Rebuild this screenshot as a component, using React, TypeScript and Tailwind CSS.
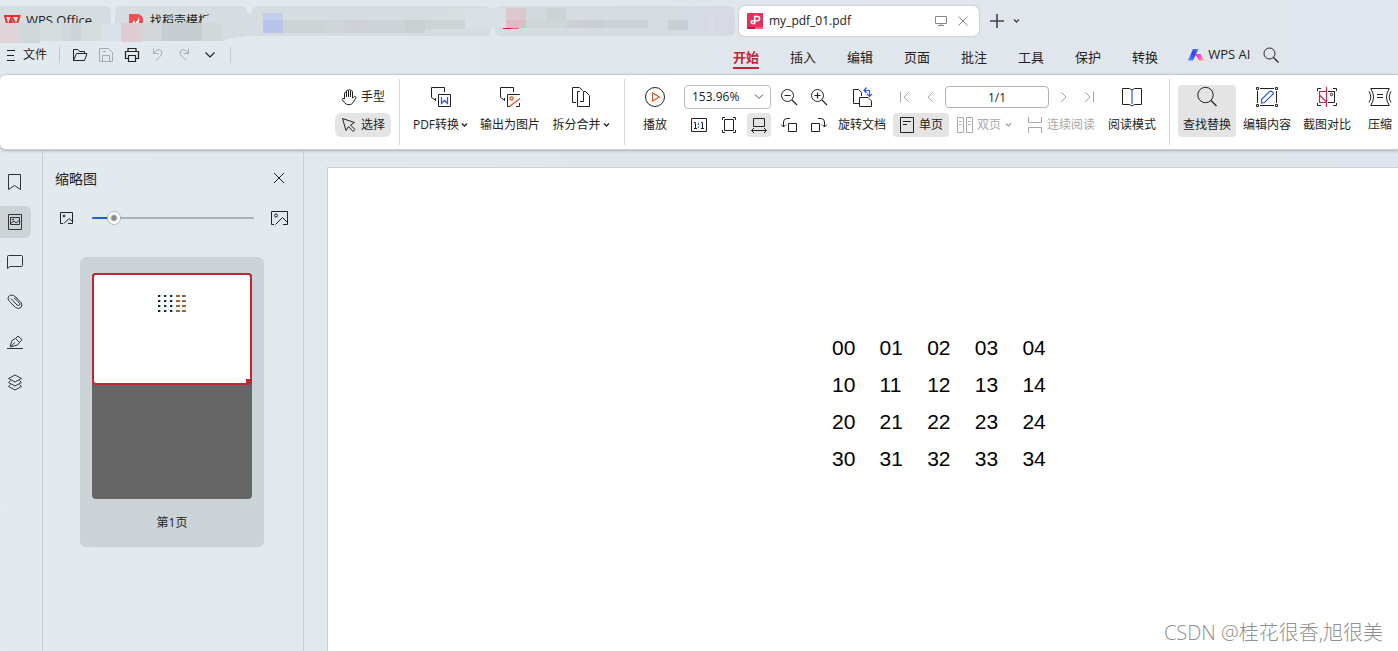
import React from "react";

type Box = { w?: number; h?: number; className?: string; children: React.ReactNode };

function Icon({ w = 20, h = 20, className = "", children }: Box) {
  return (
    <svg
      width={w}
      height={h}
      viewBox={`0 0 ${w} ${h}`}
      fill="none"
      stroke="currentColor"
      strokeWidth="1"
      className={`shrink-0 ${className}`}
      aria-hidden="true"
    >
      {children}
    </svg>
  );
}

function Caret({ className = "" }: { className?: string }) {
  return (
    <Icon w={7} h={6} className={className}>
      <path d="M1 1.5 L3.5 4 L6 1.5" strokeWidth="1.4" />
    </Icon>
  );
}

function Divider({ className = "" }: { className?: string }) {
  return <div className={`mt-1 h-[66px] w-px shrink-0 bg-[#d4d6d9] ${className}`} />;
}

function Tool({
  label,
  icon,
  caret = false,
  className = "",
}: {
  label: string;
  icon: React.ReactNode;
  caret?: boolean;
  className?: string;
}) {
  return (
    <button type="button" className={`mt-[10px] flex h-[52px] shrink-0 flex-col items-center gap-1 ${className}`}>
      <span className="flex h-6 items-center justify-center">{icon}</span>
      <span className="flex h-6 items-center justify-center gap-[2px] whitespace-nowrap">
        {label}
        {caret && <Caret />}
      </span>
    </button>
  );
}

function IconButton({
  label,
  active = false,
  children,
}: {
  label: string;
  active?: boolean;
  children: React.ReactNode;
}) {
  return (
    <button
      type="button"
      aria-label={label}
      className={`flex size-6 shrink-0 items-center justify-center rounded ${active ? "bg-[#e4e4e4]" : ""}`}
    >
      {children}
    </button>
  );
}

const mosaic: [number, number, number, number, string][] = [
  [0, 23, 20, 20, "#dfd5d8"],
  [20, 23, 20, 20, "#d0d7da"],
  [40, 23, 21, 18, "#d7dddf"],
  [61, 23, 10, 18, "#d2d9dc"],
  [71, 23, 10, 18, "#cdd4d7"],
  [81, 23, 20, 18, "#d5dcde"],
  [101, 23, 20, 18, "#dae1ea"],
  [121, 23, 21, 19, "#e0cdd1"],
  [142, 23, 20, 18, "#d3d6d9"],
  [162, 23, 40, 18, "#c7ced1"],
  [202, 23, 20, 18, "#d1d8da"],
  [263, 13, 20, 7, "#c5cdec"],
  [263, 20, 20, 13, "#b9c3ec"],
  [283, 20, 41, 13, "#cdd4d6"],
  [324, 20, 21, 13, "#cfd5d8"],
  [345, 20, 20, 13, "#cfd0d8"],
  [365, 20, 40, 13, "#ced3d7"],
  [405, 20, 20, 13, "#c9d0d2"],
  [425, 20, 40, 9, "#cdd4d6"],
  [445, 8, 20, 12, "#d7dee0"],
  [465, 8, 41, 20, "#d9e1e4"],
  [506, 8, 20, 12, "#ddc8cf"],
  [506, 20, 20, 8, "#dfbcc5"],
  [526, 8, 20, 12, "#d3dadd"],
  [526, 20, 40, 8, "#cfd6d8"],
  [546, 8, 20, 12, "#ccd3d5"],
  [566, 20, 20, 8, "#cfd0d3"],
  [586, 20, 20, 8, "#c9d0d2"],
  [606, 20, 42, 8, "#cdd4d6"],
  [668, 20, 20, 10, "#c9cfd4"],
  [708, 13, 6, 20, "#dadde6"],
  [503, 28, 8, 1, "#c8164a"],
  [511, 28, 8, 1, "#f2557a"],
];

function Mosaic() {
  return (
    <svg className="pointer-events-none absolute top-0 left-0" width="740" height="46" shapeRendering="crispEdges" aria-hidden="true">
      <path d="M202 18 L232 13 L262 13 L262 35 L238 37 L222 41 L202 41Z" fill="#d6dde0" />
      {mosaic.map(([x, y, w, h, fill], i) => (
        <rect key={i} x={x} y={y} width={w} height={h} fill={fill} />
      ))}
    </svg>
  );
}

function TitleBar() {
  return (
    <div className="relative flex h-[37px] shrink-0 items-start pt-[6px] text-[12px] text-[#222]">
      <button type="button" className="flex h-[30px] w-[111px] shrink-0 items-center gap-[5px] rounded-tr-md bg-[#d5dde0] pl-1">
        <svg width="17" height="12" viewBox="0 0 17 12" fill="none" stroke="#ee2b2b" strokeWidth="2" aria-hidden="true">
          <path d="M0 1H15.5L12.5 10H9L6.5 5L5 10H3.5L1 1M7 1L11 8" />
        </svg>
        <span className="text-[13px]">WPS Office</span>
      </button>
      <button type="button" className="ml-1 flex h-[30px] w-[132px] shrink-0 items-center gap-[7px] rounded-md bg-[#d5dde0] pl-[14px]">
        <svg width="14" height="14" viewBox="0 0 14 14" aria-hidden="true">
          <path d="M0 0H8a6 6 0 0 1 6 7v1a6 6 0 0 1-6 6H0Z" fill="#f04e52" />
          <path d="M4 13C2 9 4 9 5 6c1 2 1 3 1 4 1-3 3-3 4-7 1 6-1 7-3 10Z" fill="#fff" />
        </svg>
        <span>找稻壳模板</span>
      </button>
      <div className="ml-[5px] h-[30px] w-[239px] shrink-0 rounded-md bg-[#d5dde0]" />
      <div className="ml-1 h-[30px] w-[240px] shrink-0 rounded-md bg-linear-to-r from-[#d5dde0] to-[#d7dae3]" />
      <div className="ml-1 flex h-[30px] w-[240px] shrink-0 items-center rounded-md bg-white pr-[10px] pl-2 shadow-[0_0_2px_#9ca3af]">
        <svg width="16" height="16" viewBox="0 0 16 16" className="shrink-0" aria-hidden="true">
          <rect width="16" height="16" rx="1" fill="#e4325c" />
          <path d="M0 14H8V16H1Q0 16 0 15Z" fill="#c8164a" />
          <path d="M8 14H16V15Q16 16 15 16H8Z" fill="#fb5b81" />
          <path d="M7.7 11.2V3.5H10.5a2 2 0 0 1 0 4.200H5.500a1.400 1.400 0 0 0 0 2.800H7.700" fill="none" stroke="#fff" strokeWidth="1.5" />
        </svg>
        <span className="ml-[6px] flex-1 text-[12px]">my_pdf_01.pdf</span>
        <Icon w={12} h={12} className="mr-[10px] text-[#888]">
          <path d="M.5 1.5H11.5V8.5H.5ZM6 8.5V10.5M3 10.5H9" />
        </Icon>
        <button type="button" aria-label="关闭标签">
          <Icon w={12} h={12} className="text-[#888]">
            <path d="M1.5 1.5L10.5 10.5M10.5 1.5L1.5 10.5" />
          </Icon>
        </button>
      </div>
      <div className="flex h-[30px] items-center text-[#444]">
        <button type="button" aria-label="新建" className="ml-[11px]">
          <Icon w={14} h={14}>
            <path d="M0 7H14M7 0V14" strokeWidth="1.6" />
          </Icon>
        </button>
        <button type="button" aria-label="标签列表" className="ml-[9px]">
          <Caret />
        </button>
      </div>
      <Mosaic />
    </div>
  );
}

const menus = ["插入", "编辑", "页面", "批注", "工具", "保护", "转换"];

function MenuBar() {
  return (
    <div className="flex h-[37px] shrink-0 text-[13px] text-[#222]">
      <div className="flex h-9 w-[733px] shrink-0 items-center pl-[6px]">
        <button type="button" className="flex items-center gap-[7px] text-[12px]">
          <Icon w={10} h={11}>
            <path d="M1 .5H9M1 5.5H8M1 10.5H9" />
          </Icon>
          文件
        </button>
        <div className="ml-3 h-4 w-px bg-[#c3c8cc]" />
        <div className="ml-3 flex items-center gap-[10px]">
          <button type="button" aria-label="打开">
            <Icon w={16} h={16}>
              <path d="M1.5 13.5V2.5H6L7.5 4.5H12.5V6.5M1.5 13.5L4.5 6.5H15L12.5 13.5Z" />
            </Icon>
          </button>
          <button type="button" aria-label="保存" className="text-[#a6abae]">
            <Icon w={16} h={16}>
              <path d="M1.5 1.5H10.5L14.5 5.5V14.5H1.5ZM4.5 14V8.5H11.5V14M5 4.5H8" />
            </Icon>
          </button>
          <button type="button" aria-label="打印">
            <Icon w={16} h={16}>
              <path d="M4 4.5V1.5H12V4.5M4 11.5H1.5V4.5H14.5V11.5H12M4.5 8.5H11.5V14.5H4.5Z" strokeWidth="1.2" />
            </Icon>
          </button>
          <button type="button" aria-label="撤销" className="text-[#a6abae]">
            <Icon w={16} h={16}>
              <path d="M3.5 1.5V6.5H8.5M3.5 6.5L6 3.8Q9 1 11.5 4Q13 7 10 9.5L6 13.5" />
            </Icon>
          </button>
          <button type="button" aria-label="恢复" className="text-[#a6abae]">
            <Icon w={16} h={16}>
              <path d="M12.5 1.5V6.5H7.5M12.5 6.5L10 3.8Q7 1 4.5 4Q3 7 6 9.5L10 13.5" />
            </Icon>
          </button>
          <button type="button" aria-label="更多">
            <Icon w={16} h={16}>
              <path d="M3.5 5.5L8 10L12.5 5.5" strokeWidth="1.2" />
            </Icon>
          </button>
        </div>
        <div className="ml-3 h-4 w-px bg-[#c3c8cc]" />
      </div>
      <nav className="flex h-8 shrink-0 gap-[31px] leading-5">
        <button type="button" className="mt-2 flex h-6 items-end border-b-2 border-[#c02634] font-bold whitespace-nowrap text-[#c02634]">
          开始
        </button>
        {menus.map((m) => (
          <button key={m} type="button" className="mt-2 flex h-6 items-end border-b-2 border-transparent whitespace-nowrap">
            {m}
          </button>
        ))}
      </nav>
      <button type="button" className="ml-[30px] flex h-9 shrink-0 items-center gap-1 text-[13px] whitespace-nowrap">
        <svg width="16" height="12" viewBox="0 0 16 12" aria-hidden="true">
          <defs>
            <linearGradient id="aiBlue" x1="1" y1="0" x2="0" y2="1">
              <stop offset="0" stopColor="#27a5ff" />
              <stop offset=".4" stopColor="#4036f5" />
              <stop offset="1" stopColor="#3d9dff" />
            </linearGradient>
            <linearGradient id="aiPink" x1="0" y1="0" x2="1" y2="1">
              <stop offset="0" stopColor="#c63cf5" />
              <stop offset=".5" stopColor="#ff4fc8" />
              <stop offset="1" stopColor="#ffb26b" />
            </linearGradient>
          </defs>
          <path d="M5 0H10.5L5 11.5H0Z" fill="url(#aiBlue)" />
          <path d="M7 5H12.5L16 11.5H11Z" fill="url(#aiPink)" />
        </svg>
        WPS AI
      </button>
      <button type="button" aria-label="搜索" className="ml-3 flex h-9 items-center">
        <Icon w={18} h={18}>
          <circle cx="7.5" cy="7.5" r="5.5" />
          <path d="M11.5 11.5L16.5 16.5" strokeWidth="1.2" />
        </Icon>
      </button>
    </div>
  );
}

function Ribbon() {
  return (
    <div className="relative z-10 flex h-[76px] shrink-0 overflow-hidden rounded-l-md border-y border-[#c6ccd1] bg-white pl-[335px] text-[12px] text-[#222] shadow-[0_1px_3px_#aab0b6]">
      <div className="mt-[10px] flex w-14 shrink-0 flex-col gap-1">
        <button type="button" className="flex h-6 items-center gap-1 rounded pl-[6px]">
          <Icon w={16} h={17}>
            <path d="M3.5 10V4.2a1 1 0 0 1 2 0V8V2.2a1 1 0 0 1 2 0V8V1.5a1 1 0 0 1 2 0V8V2.7a1 1 0 0 1 2 0V9.2L13 7.7a1.1 1.1 0 0 1 1.8 1.2L12 13.7Q10.5 15.7 8 15.7Q5 15.7 3.500 13.7L1.2 10.5Q1 8.7 3.5 9.7Z" />
          </Icon>
          手型
        </button>
        <button type="button" className="flex h-6 items-center gap-1 rounded-md bg-[#e4e4e4] pl-[6px]">
          <Icon w={16} h={16}>
            <path d="M1.5 1.5L5 13.5L7.5 9.5L12 14.5L14 12.5L9.5 8L13.5 5.5Z" />
          </Icon>
          选择
        </button>
      </div>
      <Divider className="ml-2" />
      <Tool
        className="ml-[13px] w-[55px]"
        label="PDF转换"
        caret
        icon={
          <Icon w={22} h={22}>
            <path d="M6 14.5L1.5 11.5V1.5H14.5V6M5.5 12V14.5" />
            <path d="M8.5 8.5H20.5V20.5H8.5Z" />
            <path d="M11.5 11V17.5L14.5 14.5L17.5 17.5V11" stroke="#2a5be0" strokeWidth="1.3" />
          </Icon>
        }
      />
      <Tool
        className="ml-3 w-15"
        label="输出为图片"
        icon={
          <Icon w={22} h={22}>
            <path d="M6 14.5L1.5 11.5V1.5H14.5V6M5.5 12V14.5" />
            <path d="M20.5 9V8.5H8.5V20.5H11M17 20.5H20.5V17" />
            <path d="M10.5 20.5L21 12.5" stroke="#d4582a" strokeWidth="1.2" />
            <circle cx="12.5" cy="12.5" r="1.7" stroke="#d4582a" strokeWidth="1.2" />
          </Icon>
        }
      />
      <Tool
        className="ml-3 w-[58px]"
        label="拆分合并"
        caret
        icon={
          <Icon w={22} h={22}>
            <path d="M6 16.5H2.5V1.5H9.5L12.5 4.5" />
            <path d="M10 5.5H7.5V20.5H19.5V9.5L15.5 5.5H13.5V15.5H10" />
          </Icon>
        }
      />
      <Divider className="ml-[14px]" />
      <Tool
        className="ml-[18px] w-6"
        label="播放"
        icon={
          <Icon w={22} h={22}>
            <circle cx="11" cy="11" r="9.5" />
            <path d="M8.5 7L15.5 11L8.5 15Z" stroke="#d4582a" strokeWidth="1.2" />
          </Icon>
        }
      />
      <div className="mt-[10px] ml-[17px] flex w-[147px] shrink-0 flex-col gap-1">
        <div className="flex h-6 items-center gap-[6px]">
          <div className="relative h-6 w-[87px]">
            <select
              aria-label="缩放比例"
              defaultValue="153.96%"
              className="h-6 w-full appearance-none rounded border border-[#b9bcbf] bg-white pl-[7px] text-[12px] outline-none"
            >
              <option>153.96%</option>
              <option>100%</option>
            </select>
            <Icon w={10} h={8} className="pointer-events-none absolute top-2 right-[7px] text-[#555]">
              <path d="M1 1.5L5 5.5L9 1.5" />
            </Icon>
          </div>
          <IconButton label="缩小">
            <Icon w={18} h={18}>
              <circle cx="7.5" cy="7.5" r="6" />
              <path d="M12 12L17 17M4.5 7.5H10.5" strokeWidth="1.2" />
            </Icon>
          </IconButton>
          <IconButton label="放大">
            <Icon w={18} h={18}>
              <circle cx="7.5" cy="7.5" r="6" />
              <path d="M12 12L17 17M4.5 7.5H10.5M7.5 4.5V10.5" strokeWidth="1.2" />
            </Icon>
          </IconButton>
        </div>
        <div className="flex h-6 gap-[6px] pl-[3px]">
          <IconButton label="实际大小">
            <Icon w={16} h={14}>
              <path d="M.5 .5H15.5V13.5H.5ZM3 4.5H4.5V10M3 10.5H6M10 4.5H11.5V10M10 10.5H13" />
              <path d="M7.5 5V7M7.5 8.5V10" stroke="#2a5be0" strokeWidth="1.4" />
            </Icon>
          </IconButton>
          <IconButton label="适合页面">
            <Icon w={16} h={18}>
              <path d="M3.5 3.5H12.5V14.5H3.5ZM1.5 4V1.5H4M12 1.5H14.5V4M14.5 14V16.5H12M4 16.5H1.5V14" />
            </Icon>
          </IconButton>
          <IconButton label="适合宽度" active>
            <Icon w={16} h={16}>
              <path d="M2.5 9.5V1.5H13.5V9.5H2.5M.5 13.5H15.5M3 11L.5 13.5L3 16M13 11L15.5 13.5L13 16" />
            </Icon>
          </IconButton>
          <IconButton label="向左旋转">
            <Icon w={18} h={18}>
              <path d="M8.5 7.5H16.5V15.5H8.5ZM10 2.5H7Q3.5 2.5 3.5 6V11M1 8.5L3.5 11L6 8.5" />
            </Icon>
          </IconButton>
          <IconButton label="向右旋转">
            <Icon w={18} h={18}>
              <path d="M1.5 7.5H9.5V15.5H1.5ZM8 2.5H11Q14.5 2.5 14.5 6V11M12 8.5L14.5 11L17 8.5" />
            </Icon>
          </IconButton>
        </div>
      </div>
      <Tool
        className="ml-[7px] w-12"
        label="旋转文档"
        icon={
          <Icon w={22} h={22}>
            <path d="M8.5 17.5H2.5V3.5H7.5L10.5 6.5V10M8.5 11.5H17L20.5 15V20.5H8.5Z" />
            <path d="M13 4.5H18.5V10M15.5 1.5L13 4.5L15.5 7M16 8L18.5 10.5L21 8" stroke="#2a5be0" strokeWidth="1.2" />
          </Icon>
        }
      />
      <div className="mt-[10px] ml-[7px] flex w-[203px] shrink-0 flex-col gap-1 text-[#a8a8a8]">
        <div className="flex h-6 items-center">
          <button type="button" aria-label="第一页" className="ml-[7px]">
            <Icon w={10} h={12}>
              <path d="M.5 .5V11.5M9 1L4 6L9 11" />
            </Icon>
          </button>
          <button type="button" aria-label="上一页" className="ml-[17px]">
            <Icon w={7} h={12}>
              <path d="M6 1L1 6L6 11" />
            </Icon>
          </button>
          <input
            aria-label="页码"
            defaultValue="1/1"
            className="ml-[11px] h-[22px] w-[104px] rounded border border-[#b0b2b4] text-center text-[12px] text-[#222] outline-none"
          />
          <button type="button" aria-label="下一页" className="ml-[11px]">
            <Icon w={7} h={12}>
              <path d="M1 1L6 6L1 11" />
            </Icon>
          </button>
          <button type="button" aria-label="最后一页" className="ml-[17px]">
            <Icon w={10} h={12}>
              <path d="M9.5 .5V11.5M1 1L6 6L1 11" />
            </Icon>
          </button>
        </div>
        <div className="flex h-6 items-center whitespace-nowrap">
          <button type="button" className="flex h-6 w-14 items-center gap-[5px] rounded bg-[#e4e4e4] pl-[7px] text-[#222]">
            <Icon w={14} h={16}>
              <path d="M.5 .5H13.5V15.5H.5ZM3 4.5H11M3 7.5H7" />
            </Icon>
            单页
          </button>
          <button type="button" className="ml-2 flex items-center gap-1">
            <Icon w={16} h={16}>
              <path d="M.5 .5H6.5V15.5H.5ZM9.5 .5H15.5V15.5H9.5ZM2 4.5H4.5M2 7.5H4.5M11 4.5H13.5M11 7.5H13.5" />
            </Icon>
            双页
            <Caret />
          </button>
          <button type="button" className="ml-[15px] flex items-center gap-1">
            <Icon w={16} h={16}>
              <path d="M1.5 0V5.5H14.5V0M1.5 16V10.5H14.5V16" />
            </Icon>
            连续阅读
          </button>
        </div>
      </div>
      <Tool
        className="ml-3 w-12"
        label="阅读模式"
        icon={
          <Icon w={22} h={22}>
            <path d="M11 4L8.5 2.5H1.5V18.5H8.5L11 20L13.5 18.5H20.5V2.5H13.5Z" />
            <path d="M11 4V18" stroke="#2a5be0" strokeWidth="1.2" />
          </Icon>
        }
      />
      <Divider className="ml-[13px]" />
      <Tool
        className="ml-2 w-[58px] rounded bg-[#e4e4e4]"
        label="查找替换"
        icon={
          <Icon w={22} h={22}>
            <circle cx="9.5" cy="9" r="7.7" />
            <path d="M15 14.5L20.5 20" strokeWidth="1.2" />
          </Icon>
        }
      />
      <Tool
        className="ml-[7px] w-12"
        label="编辑内容"
        icon={
          <Icon w={24} h={22}>
            <path d="M2.5 5V17M21.5 5V17M5 2.5H19M5 19.5H19" />
            <path d="M1.5 1.5h2v2h-2zM20.5 1.5h2v2h-2zM1.5 18.5h2v2h-2zM20.5 18.5h2v2h-2z" />
            <path d="M6.5 17V13.5L14.5 5.5Q16 4.5 17.5 6T17.5 8.5L9.5 16.5Z" stroke="#2a5be0" strokeWidth="1.2" />
          </Icon>
        }
      />
      <Tool
        className="ml-3 w-12"
        label="截图对比"
        icon={
          <Icon w={22} h={22}>
            <path d="M1.5 5V2.5H5M17 2.5H20.5V5M20.5 17V19.5H17M5 19.5H1.5V17M12 5.5H18.5V16.5H12" />
            <circle cx="15.5" cy="8.5" r="1.2" />
            <path d="M10.5 1V21M10.5 5.5H3.5V16.5H10.5M3.5 9L10.5 16" stroke="#c4284a" strokeWidth="1.2" />
          </Icon>
        }
      />
      <Tool
        className="ml-[17px] w-6"
        label="压缩"
        icon={
          <Icon w={24} h={22}>
            <path d="M2.5 2.5H21.5M2.5 19.5H21.5M9 8.5H15M9 11.5H15" />
            <path d="M3 3Q8 11 3 19M21 3Q16 11 21 19M1 5.5Q4.5 11 1 16.5M23 5.5Q19.5 11 23 16.5" />
          </Icon>
        }
      />
    </div>
  );
}

const railItems: { label: string; active?: boolean; art: React.ReactNode }[] = [
  { label: "书签", art: <path d="M2.5 1.5H14.5V16.5L8.5 12.5L2.5 16.5Z" /> },
  {
    label: "缩略图",
    active: true,
    art: (
      <>
        <path d="M2.5 1.5H15.5V16.5H2.5ZM4.5 4.5H13.5V11.5H4.5ZM4.5 10.5L8 8L10 10L13 7.5" />
        <circle cx="7" cy="6.5" r=".6" />
      </>
    ),
  },
  { label: "批注", art: <path d="M2.5 2.5H15.5Q16.5 2.5 16.5 3.5V12.5Q16.5 13.5 15.5 13.5H4L1.5 15.5V3.5Q1.5 2.5 2.5 2.5Z" /> },
  {
    label: "附件",
    art: (
      <path d="M11.5 5.5L7.5 2.5Q4.5 1 2.5 3.5Q1 6 3.5 8.5L9.5 14.5Q12.5 16.5 15 14.5Q17 12 15 9.5L10 4.5M5 5.5L11 12Q12.5 13 13.5 12T13 9.5L8 4.8" />
    ),
  },
  {
    label: "签名",
    art: (
      <path d="M1 15.5H17M4 13.5L6 7.5L9.5 5.5L13.5 9.5L11.5 12L4.5 14M9.5 5.5L12 3L16 6.5L13.5 9.5M4.5 13.5L9 9.5" />
    ),
  },
  {
    label: "图层",
    art: <path d="M9 2L15.5 5.5L9 9L2.5 5.5ZM4.5 7.5L2.5 9.5L9 13L15.5 9.5L13.5 7.5M4.5 11.5L2.5 13.5L9 17L15.5 13.5L13.5 11.5" />,
  },
];

function Rail() {
  return (
    <div className="flex w-[43px] shrink-0 flex-col gap-2 border-r border-[#c9cfd3] pt-4 text-[#333]">
      {railItems.map((item) => (
        <button
          key={item.label}
          type="button"
          aria-label={item.label}
          className={`flex h-8 w-[31px] items-center rounded-r-md pl-[6px] ${item.active ? "bg-[#ccd4d7]" : ""}`}
        >
          <Icon w={18} h={18}>
            {item.art}
          </Icon>
        </button>
      ))}
    </div>
  );
}

const grid = [0, 1, 2, 3].map((r) => [0, 1, 2, 3, 4].map((c) => `${r}${c}`));

function ThumbnailPanel() {
  return (
    <aside className="w-[261px] shrink-0 border-r border-[#c9cfd3] text-[#222]">
      <div className="flex h-14 items-center justify-between pr-[18px] pl-3">
        <h2 className="text-[14px]">缩略图</h2>
        <button type="button" aria-label="关闭面板">
          <Icon w={12} h={12}>
            <path d="M1 1L11 11M11 1L1 11" />
          </Icon>
        </button>
      </div>
      <div className="flex h-6 items-center pr-[15px] pl-4">
        <Icon w={15} h={14}>
          <path d="M1.5 1.5H13.5V12.5H9M4 12.5H1.5V1.5M5 12.5L10 7.5L13.5 10.5" />
          <circle cx="5" cy="5" r="1" />
        </Icon>
        <input
          type="range"
          aria-label="缩略图大小"
          min={0}
          max={100}
          defaultValue={10}
          className="mr-[17px] ml-[18px] h-4 min-w-0 flex-1 appearance-none bg-transparent [&::-webkit-slider-runnable-track]:h-[2px] [&::-webkit-slider-runnable-track]:rounded-full [&::-webkit-slider-runnable-track]:bg-[linear-gradient(to_right,#1a62c8_10%,#aab1b5_10%)] [&::-webkit-slider-thumb]:-mt-[6px] [&::-webkit-slider-thumb]:size-[14px] [&::-webkit-slider-thumb]:appearance-none [&::-webkit-slider-thumb]:rounded-full [&::-webkit-slider-thumb]:border [&::-webkit-slider-thumb]:border-[#b0b6ba] [&::-webkit-slider-thumb]:bg-[radial-gradient(circle,#888_2px,#fff_4px)]"
        />
        <Icon w={17} h={16}>
          <path d="M.5 1.5H16.5V14.5H12M3 14.5H.5V1.5M4.5 14.5L11.5 7.5L16.5 12.5" />
          <circle cx="5" cy="5.5" r="1.5" />
        </Icon>
      </div>
      <figure className="mt-[27px] mr-[39px] ml-[37px] rounded-md bg-[#ccd3d6] px-3 pt-4 pb-3">
        <div className="h-[226px] rounded-sm bg-[#666]">
          <div className="relative h-[112px] rounded border-2 border-[#c02634] bg-white">
            <svg width="30" height="20" viewBox="0 0 30 20" className="mt-[19px] ml-[63px]" shapeRendering="crispEdges" aria-hidden="true">
              {grid.map((row, r) =>
                row.map((id, c) => (
                  <g key={id}>
                    <rect x={c * 6 + 1} y={r * 5 + 1} width={c > 2 ? 3 : 2} height="2" fill={c > 2 ? "#9a6238" : r === 1 ? "#4a1018" : "#222"} />
                    <rect x={c * 6 + (c > 2 ? 4 : 3)} y={r * 5 + 1} width="1" height="2" fill={c > 2 ? "#8a7a70" : "#8cc4ee"} />
                  </g>
                )),
              )}
            </svg>
            <span className="absolute right-0 bottom-0 size-1 bg-[#c02634]" />
          </div>
        </div>
        <figcaption className="mt-3 h-6 text-center text-[12px] leading-6">第1页</figcaption>
      </figure>
    </aside>
  );
}

export default function App() {
  return (
    <div className="relative flex h-screen flex-col overflow-hidden bg-linear-to-r from-[#e2eaf0] via-[#e0e7ec] to-[#e1e5ed] font-['Open_Sans','Noto_Sans_CJK_SC',sans-serif]">
      <TitleBar />
      <MenuBar />
      <Ribbon />
      <div className="flex min-h-0 flex-1">
        <Rail />
        <ThumbnailPanel />
        <main className="flex min-w-0 flex-1 pt-[17px] pl-[23px]">
          <div className="flex-1 border-t border-l border-[#c9cfd5] bg-white pt-[161px] pl-[504px]">
            <table className="w-[238px] table-fixed font-['Liberation_Sans',Arial,sans-serif] text-[21px] text-black">
              <tbody>
                {grid.map((row) => (
                  <tr key={row[0]} className="h-[37px]">
                    {row.map((cell) => (
                      <td key={cell} className="p-0">
                        {cell}
                      </td>
                    ))}
                  </tr>
                ))}
              </tbody>
            </table>
          </div>
        </main>
      </div>
      <div className="absolute right-[15px] bottom-1 text-[20px] leading-7 font-light whitespace-nowrap text-[#8f8f8f]">CSDN @桂花很香,旭很美</div>
    </div>
  );
}
